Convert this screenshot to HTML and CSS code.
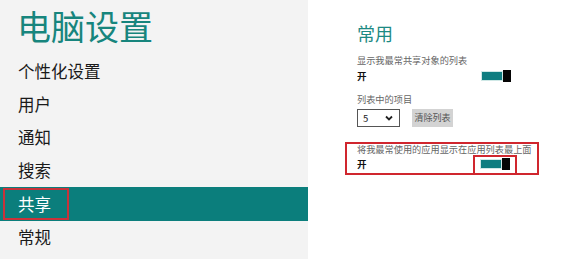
FILE: index.html
```html
<!DOCTYPE html>
<html lang="zh-CN">
<head>
<meta charset="utf-8">
<link rel="stylesheet" href="styles.css">
</head>
<body>
<div class="page">
  <nav class="side">
    <h1 class="title">电脑设置</h1>
    <div class="item">个性化设置</div>
    <div class="item">用户</div>
    <div class="item">通知</div>
    <div class="item">搜索</div>
    <div class="item active"><span class="mark">共享</span></div>
    <div class="item">常规</div>
  </nav>
  <main class="main">
    <h2 class="heading">常用</h2>
    <div class="label first">显示我最常共享对象的列表</div>
    <div class="row">
      <span class="state">开</span>
      <span class="toggle"><span class="track"></span><span class="thumb"></span></span>
    </div>
    <div class="label second">列表中的项目</div>
    <div class="controls">
      <div class="select"><span>5</span>
        <svg class="chev" width="8" height="6" viewBox="0 0 8 6"><path d="M1 1.5 L4 4.5 L7 1.5" fill="none" stroke="#222" stroke-width="1.8"/></svg>
      </div>
      <div class="btn">清除列表</div>
    </div>
    <div class="box">
      <div class="label inbox">将我最常使用的应用显示在应用列表最上面</div>
      <div class="row boxrow">
        <span class="state">开</span>
        <span class="tbox"><span class="toggle"><span class="track"></span><span class="thumb"></span></span></span>
      </div>
    </div>
  </main>
</div>
</body>
</html>
```
FILE: styles.css
```css
* { box-sizing: border-box; margin: 0; padding: 0; }
html, body { width: 566px; height: 259px; overflow: hidden; background: #fff; }
body { font-family: "Noto Sans CJK SC", "Noto Sans", sans-serif; color: #222; }
.page { display: flex; height: 259px; }
.side { width: 308px; background: #f3f3f3; display: flex; flex-direction: column; }
.title { height: 55px; line-height: 52px; font-size: 34px; font-weight: 400; color: #17857d; padding-left: 17px; }
.item { height: 33px; line-height: 33px; font-size: 16.5px; padding-left: 18px; color: #1a1a1a; display: flex; align-items: center; }
.item.active { background: #0b7e7c; color: #fff; padding-left: 3px; height: 34px; }
.mark { display: inline-block; height: 32px; line-height: 28px; border: 2px solid #c8333a; padding: 0 16px 0 13px; }
.main { flex: 1; padding: 22px 0 0 49px; display: flex; flex-direction: column; }
.heading { font-size: 18px; font-weight: 400; line-height: 22px; color: #1d8a83; }
.label { font-size: 9.2px; line-height: 12px; color: #666; white-space: nowrap; }
.label.first { margin-top: 10px; }
.label.second { margin-top: 10px; }
.row { display: flex; align-items: center; width: 154px; height: 14px; margin-top: 3px; }
.state { font-size: 9.5px; font-weight: 700; color: #111; }
.toggle { margin-left: auto; display: flex; align-items: center; width: 30px; height: 12px; }
.track { width: 22px; height: 10px; background: #0e7d80; border: 1.5px solid #cfe8e6; }
.thumb { width: 8px; height: 12px; background: #050505; }
.controls { display: flex; gap: 12px; margin-top: 4px; height: 18px; }
.select { width: 43px; height: 18px; border: 1px solid #555; background: #fff; display: flex; align-items: center; justify-content: space-between; padding: 0 6px 0 5px; font-size: 9.5px; color: #222; }
.btn { width: 41px; height: 18px; background: #d3d3d3; font-size: 9px; line-height: 18px; text-align: center; color: #555; }
.box { margin: 15px 0 0 -12px; width: 194px; height: 33px; border: 2px solid #d0262e; padding: 0 5px 0 10px; display: flex; flex-direction: column; }
.label.inbox { line-height: 10px; }
.boxrow { width: auto; height: 18px; margin-top: 1px; }
.tbox { margin-left: auto; margin-right: 15px; width: 44px; height: 18px; border: 2px solid #d0262e; border-bottom: none; padding: 1px 4px 0 5px; }
.tbox .toggle { margin-left: 0; }
```
